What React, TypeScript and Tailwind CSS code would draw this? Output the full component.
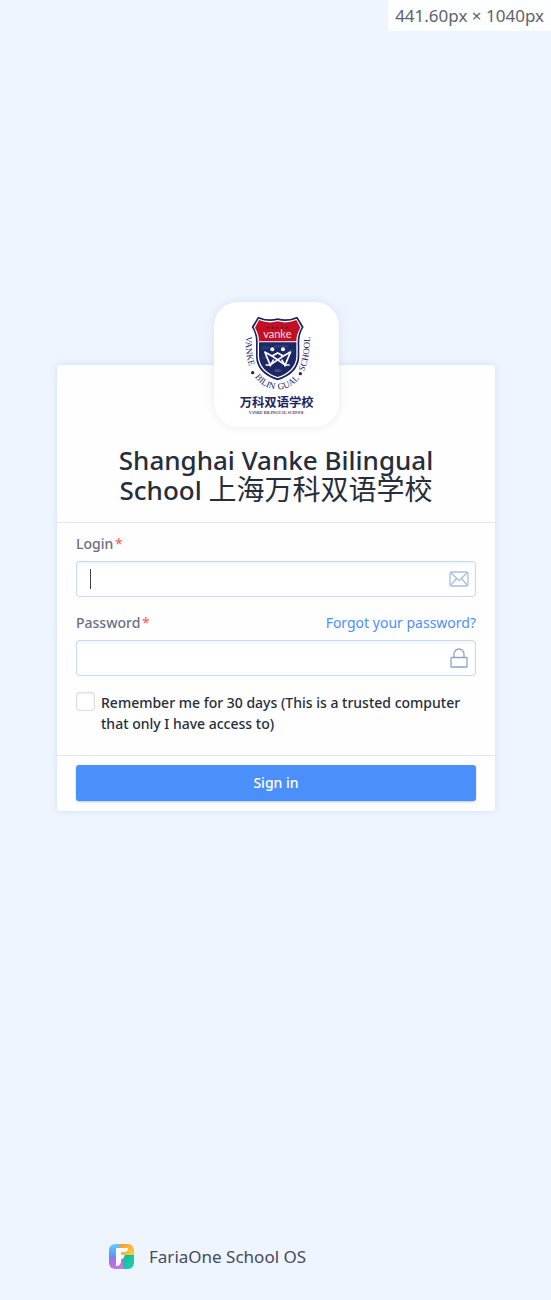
import React from 'react';

function SchoolCrest() {
  return (
    <svg viewBox="25 21 375 375" className="size-full" role="img" aria-label="Shanghai Vanke Bilingual School crest">
      <defs>
        <path id="crest-ring" d="M121 124 C118 152 122 192 134 222 C150 260 180 283 216 283 C252 283 282 260 298 222 C310 192 315 152 312 104" />
      </defs>
      <path d="M157 65 Q187 78 216 70 Q245 78 275 65 L294 96 Q279 118 281 150 V185 Q279 235 216 256 Q153 235 151 185 V150 Q153 118 138 96 Z" fill="#1d2160" />
      <path d="M159 71 Q188 83 216 75 Q244 83 273 71 L288 97 Q274 120 276 150 V185 Q273 231 216 250 Q159 231 156 185 V150 Q158 120 144 97 Z" fill="#fff" />
      <path d="M160 75 Q188 87 216 79 Q244 87 272 75 L284 98 Q272 118 272 139 H160 Q160 118 148 98 Z" fill="#c10f25" />
      <path d="M160 142 H272 V185 Q269 228 216 246 Q163 228 160 185 Z" fill="#1c2766" />
      <path d="M168 154 h24 v8 h-24 z M205 150 h42 v8 h-42 z M246 164 h18 v8 h-18 z M170 184 h14 v8 h-14 z" fill="#285388" opacity=".5" />
      <g fill="#5b1030">
        <circle cx="187" cy="98" r="3" />
        <circle cx="201" cy="98" r="3" />
        <circle cx="215" cy="98" r="3" />
        <circle cx="229" cy="98" r="3" />
        <circle cx="243" cy="98" r="3" />
      </g>
      <text x="215" y="130" textAnchor="middle" fontSize="33" fill="#f6dfe2" fontFamily="Lato, sans-serif">vanke</text>
      <g fill="none" stroke="#fff" strokeWidth="5">
        <path d="M176 170 L199 183 L216 174 L233 183 L256 170" />
        <path d="M199 183 L240 211 M233 183 L192 211" />
        <path d="M178 172 L194 211 L204 194 M254 172 L238 211 L228 194" />
        <path d="M180 210 H196 M236 210 H252" />
      </g>
      <circle cx="200" cy="163" r="6" fill="#fff" />
      <circle cx="232" cy="163" r="6" fill="#fff" />
      <text x="216" y="231" textAnchor="middle" fontSize="8" fill="#9aa4cc" fontFamily="Liberation Sans, sans-serif">· 2001 ·</text>
      <g fontFamily="Liberation Serif, serif" fontSize="27" fill="#22265f">
        <text><textPath href="#crest-ring" startOffset="0">VANKE</textPath></text>
        <text><textPath href="#crest-ring" startOffset="127">BILIN</textPath></text>
        <text><textPath href="#crest-ring" startOffset="209">GUAL</textPath></text>
        <text><textPath href="#crest-ring" startOffset="308">SCHOOL</textPath></text>
      </g>
      <circle cx="141" cy="233" r="5" fill="#22265f" />
      <circle cx="284" cy="236" r="5" fill="#22265f" />
      <text x="213" y="337" textAnchor="middle" fontSize="37" fontWeight="700" fill="#20245e" fontFamily="Noto Sans CJK SC, sans-serif">万科双语学校</text>
      <text x="213" y="357" textAnchor="middle" fontSize="12" fontWeight="700" fill="#3a3e72" fontFamily="Liberation Serif, serif">VANKE BILINGUAL SCHOOL</text>
    </svg>
  );
}

function MailIcon() {
  return (
    <svg viewBox="0 0 20 16" className="h-4 w-5" fill="none" stroke="#a9bfdf" strokeWidth="1.3" aria-hidden="true">
      <rect x="1" y="1" width="18" height="14" rx="1.5" />
      <path d="M1.5 1.5 L10 9.5 L18.500 1.5 M1.500 14.500 L7.500 7.500 M18.500 14.500 L12.500 7.500" />
    </svg>
  );
}

function LockIcon() {
  return (
    <svg viewBox="0 0 20 20" className="size-5" fill="none" stroke="#8ea4c8" strokeWidth="1.3" aria-hidden="true">
      <rect x="2" y="9.500" width="16" height="9.500" rx="0.6" />
      <path d="M5 9.500 V6 A5 5 0 0 1 15 6 V9.500" />
    </svg>
  );
}

function ProductLogo() {
  return (
    <svg viewBox="0 0 25 25" className="size-[25px]" aria-hidden="true">
      <defs>
        <clipPath id="tile"><rect width="25" height="25" rx="6" /></clipPath>
        <linearGradient id="blue" x1="0" y1="0" x2="0" y2="1"><stop stopColor="#6cc9fa" /><stop offset="1" stopColor="#4f8ff7" /></linearGradient>
        <linearGradient id="gold" x1="0" y1="0" x2="1" y2="1"><stop stopColor="#f59b3c" /><stop offset="1" stopColor="#fbd23e" /></linearGradient>
        <linearGradient id="green" x1="0" y1="0" x2="1" y2="1"><stop stopColor="#12b99c" /><stop offset="1" stopColor="#1fd3b0" /></linearGradient>
        <linearGradient id="violet" x1="0" y1="0" x2="1" y2="1"><stop stopColor="#a56be4" /><stop offset="1" stopColor="#c97ee0" /></linearGradient>
      </defs>
      <g clipPath="url(#tile)">
        <rect width="12" height="15" fill="url(#blue)" />
        <rect x="11" width="14" height="11" fill="url(#gold)" />
        <rect y="14" width="15" height="11" fill="url(#violet)" />
        <rect x="14" y="11" width="11" height="14" fill="url(#green)" />
        <path d="M7 4 H19 Q19 8 15 8 H12 V11 H15.500 Q15.500 15 12 15 V17 Q12 22 7 22 Z" fill="#fff" />
      </g>
    </svg>
  );
}

const inputClass =
  'block h-9 w-full rounded-[3px] border border-[#c5dbf3] bg-white pl-3 pr-9 text-[15px] text-[#2a3142] shadow-[inset_0_2px_3px_rgba(60,80,120,0.07)] outline-none';
const labelClass = 'block text-sm leading-5 font-medium text-[#667085]';

export default function App() {
  return (
    <div className="flex min-h-screen flex-col bg-[#eef5ff] font-['Noto_Sans','Noto_Sans_CJK_SC',sans-serif] text-[#262d3b]">
      <div className="absolute top-0 right-0 bg-white/85 px-[7px] pt-1 pb-[3px] text-[17px] leading-6 text-[#606368]">
        441.60px × 1040px
      </div>
      <main className="flex-1 pt-[302px] pr-14 pl-[57px]">
        <form
          className="mt-[63px] rounded-[3px] bg-[#fefefe] shadow-[0_0_6px_rgba(60,100,170,0.16)]"
          onSubmit={(e) => e.preventDefault()}
        >
          <header className="flex flex-col items-center border-b border-[#dbe8f7] px-10 pb-[17px]">
            <div className="-mt-[63px] size-[125px] overflow-hidden rounded-3xl bg-white shadow-[0_0_8px_rgba(60,80,120,0.12)]">
              <SchoolCrest />
            </div>
            <h1 className="mt-[18px] text-center text-[26px] leading-[30px] font-medium">
              Shanghai Vanke Bilingual School <span className="text-[28px] leading-none font-normal">上海万科双语学校</span>
            </h1>
          </header>
          <div className="px-[19px] pt-[11px] pb-[21px]">
            <label htmlFor="login" className={labelClass}>
              Login <span className="-ml-0.5 font-normal text-[#fb5a5a]">*</span>
            </label>
            <div className="relative mt-[7px]">
              <input id="login" type="text" className={inputClass} />
              <span className="absolute top-2 left-3.5 h-5 w-px bg-[#444]" />
              <span className="absolute inset-y-0 right-[7px] flex items-center"><MailIcon /></span>
            </div>
            <div className="mt-4 flex items-center justify-between">
              <label htmlFor="password" className={labelClass}>
                Password <span className="-ml-0.5 font-normal text-[#fb5a5a]">*</span>
              </label>
              <a href="#forgot" className="text-sm leading-5 text-[#4b8ffb]">Forgot your password?</a>
            </div>
            <div className="relative mt-[7px]">
              <input id="password" type="password" className={inputClass} />
              <span className="absolute inset-y-0 right-[7px] flex items-center"><LockIcon /></span>
            </div>
            <div className="mt-4 flex items-start gap-1.5">
              <input
                id="remember"
                type="checkbox"
                className="size-[19px] shrink-0 appearance-none rounded-[3px] border border-[#dedede] bg-white shadow-[inset_0_1px_3px_rgba(0,0,0,0.08)]"
              />
              <label htmlFor="remember" className="text-sm leading-[21px] font-medium">
                Remember me for 30 days (This is a trusted computer that only I have access to)
              </label>
            </div>
          </div>
          <footer className="border-t border-[#dbe8f7] px-[19px] pt-[9px] pb-2.5">
            <button
              type="submit"
              className="block h-9 w-full rounded-[3px] bg-[#4b8ffb] text-sm font-medium text-white shadow-[0_1px_2px_rgba(40,80,160,0.3)]"
            >
              Sign in
            </button>
          </footer>
        </form>
      </main>
      <footer className="flex items-center gap-[15px] pb-[31px] pl-[109px]">
        <ProductLogo />
        <span className="text-[17px] leading-6 text-[#454a5e]">FariaOne School OS</span>
      </footer>
    </div>
  );
}
